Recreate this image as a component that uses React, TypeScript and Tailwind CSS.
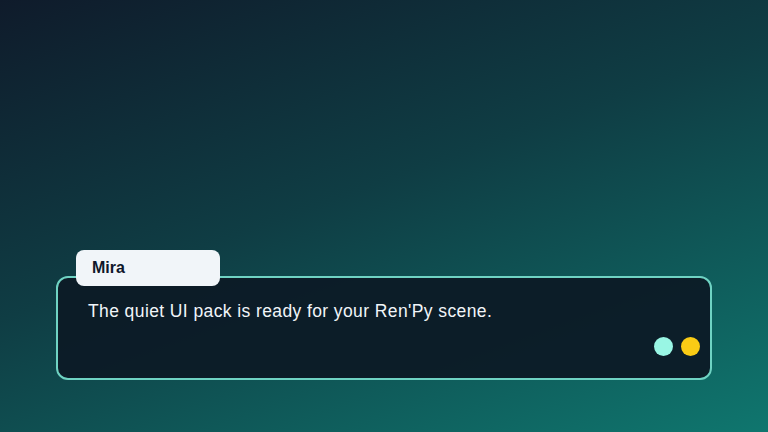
import React from 'react';

const App: React.FC = () => {
  return (
    <div
      className="w-[768px] h-[432px] flex flex-col justify-end px-[56px] pb-[52px] bg-[linear-gradient(160deg,#0f1b2b_0%,#0f3d44_45%,#0f766e_100%)]"
      style={{ fontFamily: '"Liberation Sans", Arial, sans-serif' }}
    >
      <div className="relative z-10 ml-[20px] w-[144px] h-[36px] rounded-[8px] bg-[#f1f5f9] px-[16px] pt-[9px] text-[16px] font-bold text-[#0f172a] leading-[18px]">
        Mira
      </div>
      <div className="-mt-[10px] h-[104px] rounded-[12px] border-2 border-[#6fd3c3] bg-[#0d1a26]/95 flex flex-col justify-between pl-[30px] pr-[10px] pt-[22px] pb-[22px]">
        <p className="text-[17.5px] tracking-[0.4px] leading-[22px] text-[#f1f5f9]">
          The quiet UI pack is ready for your Ren'Py scene.
        </p>
        <div className="flex justify-end gap-[8px]">
          <span className="w-[19px] h-[19px] rounded-full bg-[#99f6e4]" />
          <span className="w-[19px] h-[19px] rounded-full bg-[#facc15]" />
        </div>
      </div>
    </div>
  );
};

export default App;
